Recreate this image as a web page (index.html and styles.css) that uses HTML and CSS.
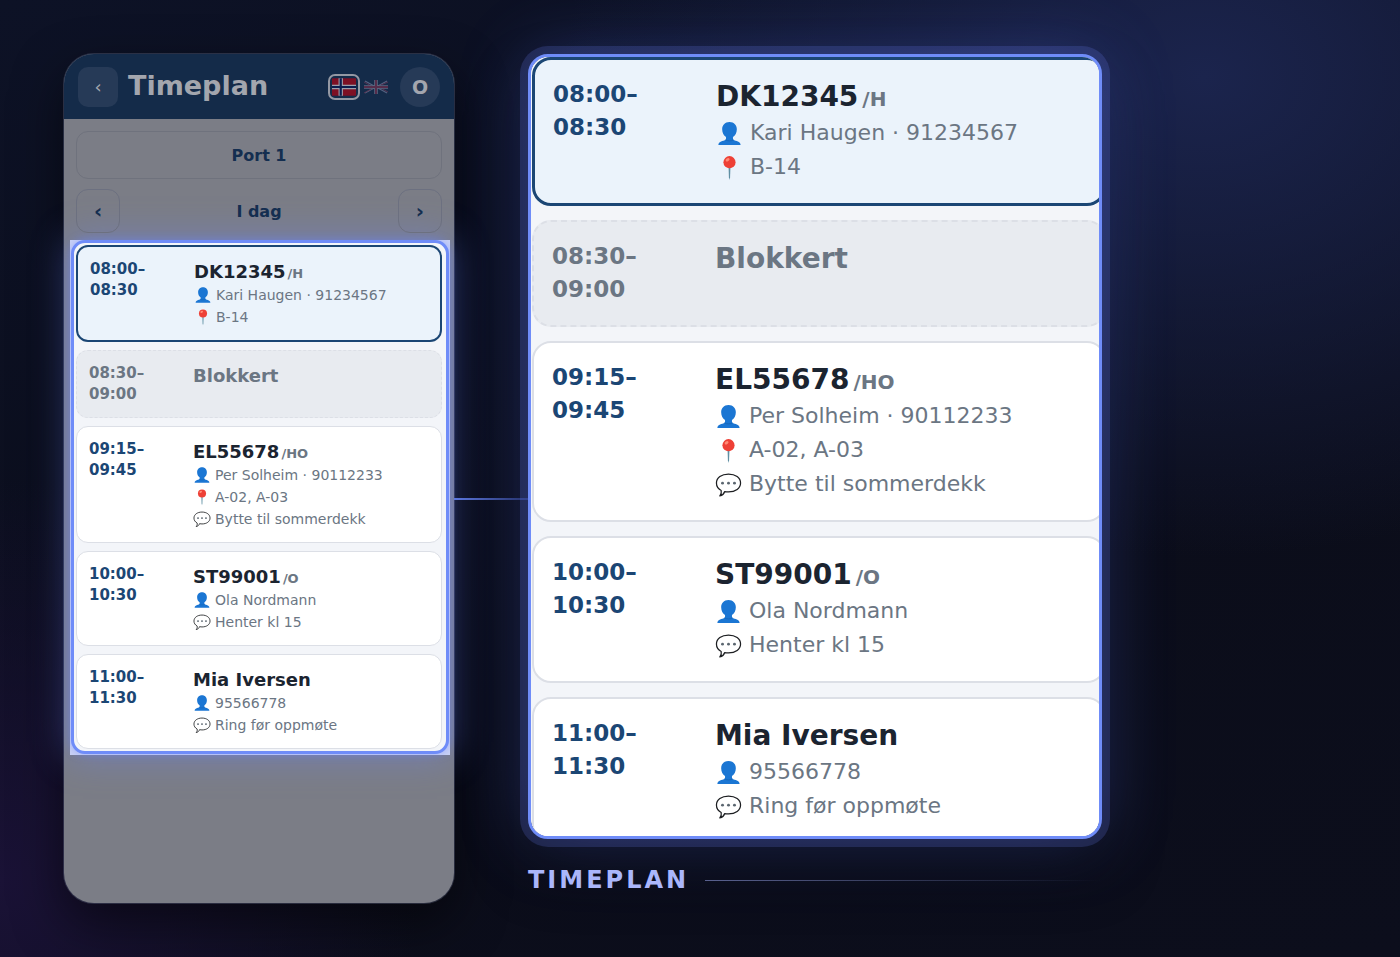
FILE: index.html
```html
<!DOCTYPE html>
<html lang="no">
<head>
<meta charset="utf-8">
<meta name="viewport" content="width=device-width, initial-scale=1">
<title>Timeplan</title>
<link rel="stylesheet" href="styles.css">
</head>
<body>
<svg class="sprite" aria-hidden="true">
  <symbol id="person" viewBox="0 0 28 28">
    <path fill="#1b76d3" d="M14 2c4.800 0 7.600 3.400 7.600 7.600 0 3.600-1.700 6.700-4 8.100v1.800c0 .8.400 1.200 1.300 1.500 3.900 1.200 6.600 1.900 6.600 5H2.500c0-3.100 2.700-3.800 6.600-5 .9-.3 1.300-.7 1.300-1.500v-1.800c-2.300-1.400-4-4.500-4-8.100C6.400 5.400 9.200 2 14 2z"/>
    <path fill="none" stroke="#1560b0" stroke-width=".8" d="M9.800 20.500c2.600 1.600 5.800 1.600 8.400 0"/>
  </symbol>
  <symbol id="pin" viewBox="0 0 28 28">
    <path fill="#5f8fa3" d="M13 13h2l-.4 11-.6 3-.6-3z"/>
    <circle cx="14" cy="8.500" r="6.300" fill="#ee4036"/>
    <ellipse cx="12" cy="6" rx="2.200" ry="1.500" fill="#ff8a75" transform="rotate(-35 12 6)"/>
  </symbol>
  <symbol id="speech" viewBox="0 0 28 28">
    <path fill="#fff" stroke="#1d1f22" stroke-width="1.300" stroke-linejoin="round" d="M14 3.200c7.300 0 12.500 3.900 12.500 9.300S21.300 21.700 14 21.700c-1.400 0-2.700-.1-3.900-.4-.8 2.500-2.600 4-5.100 4.500 1.400-1.500 1.900-3.300 1.400-5.600C3.300 18.600 1.500 15.900 1.500 12.500 1.500 7.100 6.700 3.200 14 3.200z"/>
    <g fill="#5b6670"><circle cx="7.800" cy="12.600" r="1.500"/><circle cx="14" cy="12.600" r="1.500"/><circle cx="20.200" cy="12.600" r="1.500"/></g>
  </symbol>
</svg>

<main class="stage">
  <section class="phone" aria-label="Timeplan">
    <header class="topbar">
      <button class="back" type="button" aria-label="Tilbake">‹</button>
      <h1 class="title">Timeplan</h1>
      <button class="flag flag-on" type="button" aria-label="Norsk">
        <svg viewBox="0 0 22 16" width="24" height="18"><path fill="#7d1024" d="M0 0h22v16H0z"/><path stroke="#9c9fac" stroke-width="4" d="M8 0v16M0 8h22"/><path stroke="#0b1c4e" stroke-width="2" d="M8 0v16M0 8h22"/></svg>
      </button>
      <button class="flag flag-off" type="button" aria-label="English">
        <svg viewBox="0 0 24 14" width="24" height="14"><path stroke="#8c8fae" stroke-width="1.200" d="M1 1l22 12M23 1L1 13"/><path stroke="#8a3c5b" stroke-width="1" d="M0 2l9 5M15 7l9 5M24 2l-9 4M9 8l-9 5"/><path stroke="#9698ad" stroke-width="3.600" d="M12 0v14M0 7h24"/><path stroke="#8b2f4e" stroke-width="2" d="M12 0v14M0 7h24"/></svg>
      </button>
      <button class="avatar" type="button">O</button>
    </header>
    <button class="port" type="button">Port 1</button>
    <nav class="daynav">
      <button class="step" type="button" aria-label="Forrige dag">‹</button>
      <span class="day">I dag</span>
      <button class="step" type="button" aria-label="Neste dag">›</button>
    </nav>
    <div class="spot">
      <ul class="slots ring">
        <li class="slot active">
          <div class="time">08:00–<br>08:30</div>
          <div><div class="plate">DK12345<small>/H</small></div>
            <div class="meta"><svg><use href="#person"/></svg>Kari Haugen · 91234567</div>
            <div class="meta"><svg><use href="#pin"/></svg>B-14</div></div>
        </li>
        <li class="slot blocked">
          <div class="time">08:30–<br>09:00</div>
          <div><div class="plate">Blokkert</div></div>
        </li>
        <li class="slot">
          <div class="time">09:15–<br>09:45</div>
          <div><div class="plate">EL55678<small>/HO</small></div>
            <div class="meta"><svg><use href="#person"/></svg>Per Solheim · 90112233</div>
            <div class="meta"><svg><use href="#pin"/></svg>A-02, A-03</div>
            <div class="meta"><svg><use href="#speech"/></svg>Bytte til sommerdekk</div></div>
        </li>
        <li class="slot">
          <div class="time">10:00–<br>10:30</div>
          <div><div class="plate">ST99001<small>/O</small></div>
            <div class="meta"><svg><use href="#person"/></svg>Ola Nordmann</div>
            <div class="meta"><svg><use href="#speech"/></svg>Henter kl 15</div></div>
        </li>
        <li class="slot">
          <div class="time">11:00–<br>11:30</div>
          <div><div class="plate">Mia Iversen</div>
            <div class="meta"><svg><use href="#person"/></svg>95566778</div>
            <div class="meta"><svg><use href="#speech"/></svg>Ring før oppmøte</div></div>
        </li>
      </ul>
    </div>
  </section>

  <div class="connector"></div>

  <section class="detail">
    <div class="lens">
      <ul class="slots large">
        <li class="slot active">
          <div class="time">08:00–<br>08:30</div>
          <div><div class="plate">DK12345<small>/H</small></div>
            <div class="meta"><svg><use href="#person"/></svg>Kari Haugen · 91234567</div>
            <div class="meta"><svg><use href="#pin"/></svg>B-14</div></div>
        </li>
        <li class="slot blocked">
          <div class="time">08:30–<br>09:00</div>
          <div><div class="plate">Blokkert</div></div>
        </li>
        <li class="slot">
          <div class="time">09:15–<br>09:45</div>
          <div><div class="plate">EL55678<small>/HO</small></div>
            <div class="meta"><svg><use href="#person"/></svg>Per Solheim · 90112233</div>
            <div class="meta"><svg><use href="#pin"/></svg>A-02, A-03</div>
            <div class="meta"><svg><use href="#speech"/></svg>Bytte til sommerdekk</div></div>
        </li>
        <li class="slot">
          <div class="time">10:00–<br>10:30</div>
          <div><div class="plate">ST99001<small>/O</small></div>
            <div class="meta"><svg><use href="#person"/></svg>Ola Nordmann</div>
            <div class="meta"><svg><use href="#speech"/></svg>Henter kl 15</div></div>
        </li>
        <li class="slot">
          <div class="time">11:00–<br>11:30</div>
          <div><div class="plate">Mia Iversen</div>
            <div class="meta"><svg><use href="#person"/></svg>95566778</div>
            <div class="meta"><svg><use href="#speech"/></svg>Ring før oppmøte</div></div>
        </li>
      </ul>
    </div>
    <h2 class="caption">TIMEPLAN</h2>
  </section>
</main>
</body>
</html>
```
FILE: styles.css
```css
* { box-sizing: border-box; }

body {
  margin: 0;
  background:
    radial-gradient(ellipse 640px 480px at 86% 8%, #1b244d 0%, rgba(27, 36, 77, 0) 100%),
    radial-gradient(ellipse 420px 400px at 0% 92%, #1a1236 0%, rgba(26, 18, 54, 0) 100%),
    linear-gradient(160deg, #0d1226 0%, #0b0d1a 60%, #0c0e1c 100%);
  font-family: "DejaVu Sans", sans-serif;
  color: #1b2430;
}

button {
  margin: 0;
  padding: 0;
  border: 0;
  background: none;
  font: inherit;
  color: inherit;
}

.sprite { display: none; }

.stage {
  display: flex;
  min-height: 100vh;
  padding: 54px 64px;
}

/* Phone, dimmed around the highlighted list */
.phone {
  flex: 0 0 390px;
  border-radius: 30px;
  background: #7b7d86;
  box-shadow:
    0 0 0 1px rgba(90, 98, 125, .4),
    0 20px 50px rgba(0, 0, 0, .5);
}

.topbar {
  display: flex;
  align-items: center;
  height: 65px;
  padding: 0 14px;
  border-radius: 30px 30px 0 0;
  background: #142b49;
  color: #a3a6ae;
}

.back {
  width: 40px;
  height: 40px;
  border-radius: 10px;
  background: #263a57;
  font-size: 18px;
}

.title {
  flex: 1;
  margin: 0 0 2px 10px;
  font-size: 27px;
  line-height: 32px;
}

.flag {
  display: flex;
  align-items: center;
  justify-content: center;
  height: 26px;
}

.flag-on {
  width: 32px;
  border: 2px solid #9498a3;
  border-radius: 7px;
}

.flag-off {
  margin: 0 12px 0 4px;
  opacity: .55;
}

.avatar {
  width: 40px;
  height: 40px;
  border-radius: 50%;
  background: #263a57;
  font-size: 19px;
  font-weight: bold;
}

.port {
  display: block;
  width: calc(100% - 24px);
  height: 48px;
  margin: 12px 12px 10px;
  border: 1px solid #6f727d;
  border-radius: 12px;
  color: #142e50;
  font-size: 16px;
  font-weight: bold;
}

.daynav {
  display: flex;
  align-items: center;
  justify-content: space-between;
  padding: 0 12px;
  color: #142e50;
  font-size: 16px;
  font-weight: bold;
}

.step {
  width: 44px;
  height: 44px;
  border: 1px solid #6c7080;
  border-radius: 12px;
  font-size: 20px;
}

.spot {
  margin: 7px 4px 0 6px;
  padding: 0 1px 1px;
  background: #cbd3f5;
  box-shadow: 0 0 36px rgba(107, 134, 255, .45);
}

.ring {
  border: 3px solid #6f8cf8;
  border-radius: 14px;
  box-shadow: 0 0 8px rgba(107, 134, 255, .5);
}

/* Appointment list */
.slots {
  display: grid;
  gap: 8px;
  margin: 0;
  padding: 2px 4px 2px 2px;
  background: #f3f5f9;
  list-style: none;
}

.slot {
  display: grid;
  grid-template-columns: 104px 1fr;
  padding: 12px;
  border: 1px solid #dcdfe6;
  border-radius: 12px;
  background: #fff;
}

.active {
  border: 2px solid #1b4674;
  background: #ebf3fb;
}

.blocked {
  border-style: dashed;
  background: #e8ebf0;
}

.time {
  color: #1b4674;
  font-size: 15px;
  font-weight: bold;
  line-height: 21px;
}

.plate {
  font-size: 18px;
  font-weight: bold;
  line-height: 25px;
}

.plate small {
  margin-left: 2px;
  color: #6b7683;
  font-size: 13px;
  line-height: 1;
}

.blocked .time,
.blocked .plate { color: #6b7683; }

.meta {
  display: flex;
  align-items: center;
  gap: 4px;
  color: #6b7683;
  font-size: 14px;
  line-height: 22px;
}

.meta svg {
  width: 18px;
  height: 18px;
}

.connector {
  flex: 0 0 74px;
  align-self: center;
  height: 2px;
  margin-top: 40px;
  background: linear-gradient(90deg, #5d78de, #28356f);
}

/* Enlarged view */
.detail { flex: 0 1 574px; }

.lens {
  overflow: hidden;
  border: 3px solid #6f8cf8;
  border-radius: 20px;
  background: #f3f5f9 padding-box;
  box-shadow:
    0 0 0 8px rgba(107, 124, 240, .2),
    0 0 70px rgba(90, 120, 255, .3),
    0 30px 60px rgba(0, 0, 0, .4);
}

.large {
  gap: 14px;
  margin: 0 -7px -8px 0;
  padding: 0 0 0 1px;
}

.large .slot {
  grid-template-columns: 163px 1fr;
  padding: 18px 18px 19px;
  border-width: 2px;
  border-radius: 19px;
}

.large .active { border-width: 3px; }

.large .time {
  font-size: 23px;
  line-height: 33px;
}

.large .plate {
  font-size: 28px;
  line-height: 38px;
}

.large .plate small {
  margin-left: 4px;
  font-size: 20px;
}

.large .meta {
  gap: 7px;
  font-size: 22px;
  line-height: 34px;
}

.large .meta svg {
  width: 27px;
  height: 27px;
}

.caption {
  position: relative;
  display: flex;
  align-items: center;
  gap: 16px;
  margin: 26px 0 0;
  color: #aab6fb;
  font-size: 24px;
  line-height: 30px;
  letter-spacing: 3px;
}

.caption::after {
  content: "";
  flex: 1;
  height: 1px;
  background: linear-gradient(90deg, #59618f, rgba(89, 97, 143, 0));
}
```
